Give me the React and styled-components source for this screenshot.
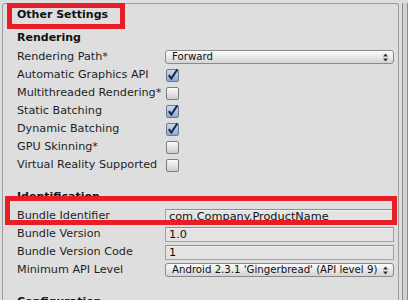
import React from 'react';
import styled, { createGlobalStyle } from 'styled-components';

const Global = createGlobalStyle`
  html, body { margin: 0; padding: 0; background: #dedede; }
  body {
    width: 408px; height: 300px; overflow: hidden;
    font-family: "DejaVu Sans", Verdana, sans-serif;
    color: #1e1e1e;
  }
`;

const Screen = styled.div`
  display: flex;
  align-items: stretch;
  height: 300px;
  box-sizing: border-box;
  padding: 3px 0 0 2px;
`;

const Panel = styled.div`
  width: 397px;
  box-sizing: border-box;
  border: 1px solid #9c9c9c;
  border-bottom: none;
  border-radius: 3px 3px 0 0;
  background: #dedede;
  padding-top: 2px;
`;

const Scroll = styled.div`
  margin-left: 3px;
  width: 6px;
  box-sizing: border-box;
  border-left: 1px solid #8c8c8c;
  border-right: 1px solid #8c8c8c;
  background: #d2d2d2;
`;

const Marked = styled.div`
  position: relative;
  &::after {
    content: '';
    position: absolute;
    box-sizing: border-box;
    border: 5px solid #e81d25;
    pointer-events: none;
    left: ${p => p.$l}px;
    top: ${p => p.$t}px;
    width: ${p => p.$w}px;
    height: ${p => p.$h}px;
  }
`;

const Title = styled.div`
  height: 18px;
  line-height: 18px;
  padding-left: 14px;
  font-size: 11px;
  font-weight: bold;
  color: #111;
`;

const Section = styled.div`
  margin-top: ${p => (p.$first ? 5 : 14)}px;
  display: flex;
  flex-direction: column;
`;

const Header = styled.div`
  height: 19px;
  line-height: 18px;
  padding-left: 14px;
  font-size: 11px;
  font-weight: bold;
  color: #111;
`;

const Row = styled.div`
  display: flex;
  align-items: center;
  height: 18px;
  padding-left: 14px;
`;

const Label = styled.div`
  width: 148px;
  flex: none;
  font-size: 11.2px;
  line-height: 18px;
  white-space: nowrap;
`;

const Box = styled.div`
  width: 13px;
  height: 13px;
  margin-left: 1px;
  box-sizing: border-box;
  border-radius: 2px;
  border: 1px solid ${p => (p.$on ? '#6d7a8c' : '#7c7c7c')};
  background: ${p =>
    p.$on
      ? 'linear-gradient(#c9daf0, #8eaad3)'
      : 'linear-gradient(#fbfbfb, #cdcdcd)'};
  display: flex;
  svg { overflow: visible; }
`;

const Popup = styled.div`
  width: 229px;
  height: 14px;
  box-sizing: border-box;
  border: 1px solid #8a8a8a;
  border-radius: 3px;
  background: linear-gradient(#fcfcfc, #d4d4d4);
  display: flex;
  align-items: center;
  padding: 0 5px 0 6px;
  font-size: 10.2px;
  line-height: 12px;
  color: #111;
  white-space: nowrap;
  span { flex: 1; }
`;

const Field = styled.div`
  width: 229px;
  height: 15px;
  box-sizing: border-box;
  border: 1px solid #a2a2a2;
  border-top-color: #8e8e8e;
  background: #e3e3e3;
  box-shadow: inset 0 1px 0 #f0f0f0;
  padding-left: 3px;
  font-size: 11.3px;
  line-height: 13px;
  color: #111;
  white-space: nowrap;
`;

const Check = () => (
  <svg width="11" height="11" viewBox="0 0 11 11">
    <path d="M1.8 5.2 L4.3 8.6 L10.4 -0.6" fill="none" stroke="#1a2a44" strokeWidth="2" />
  </svg>
);

const Arrows = () => (
  <svg width="5" height="9" viewBox="0 0 5 9">
    <path d="M2.5 0.5 L5 3.5 L0 3.5 Z" fill="#333" />
    <path d="M0 5.5 L5 5.5 L2.5 8.5 Z" fill="#333" />
  </svg>
);

const CheckRow = ({ label, on }) => (
  <Row>
    <Label>{label}</Label>
    <Box $on={on}>{on && <Check />}</Box>
  </Row>
);

const PopupRow = ({ label, value }) => (
  <Row>
    <Label>{label}</Label>
    <Popup>
      <span>{value}</span>
      <Arrows />
    </Popup>
  </Row>
);

const FieldRow = ({ label, value }) => (
  <Row>
    <Label>{label}</Label>
    <Field>{value}</Field>
  </Row>
);

export default function App() {
  return (
    <>
      <Global />
      <Screen>
        <Panel>
          <Marked $l={4} $t={-3} $w={118} $h={26}>
            <Title>Other Settings</Title>
          </Marked>
          <Section $first>
            <Header>Rendering</Header>
            <PopupRow label="Rendering Path*" value="Forward" />
            <CheckRow label="Automatic Graphics API" on />
            <CheckRow label="Multithreaded Rendering*" />
            <CheckRow label="Static Batching" on />
            <CheckRow label="Dynamic Batching" on />
            <CheckRow label="GPU Skinning*" />
            <CheckRow label="Virtual Reality Supported" />
          </Section>
          <Section>
            <Header>Identification</Header>
            <Marked $l={2} $t={-11} $w={392} $h={29}>
              <FieldRow label="Bundle Identifier" value="com.Company.ProductName" />
            </Marked>
            <FieldRow label="Bundle Version" value="1.0" />
            <FieldRow label="Bundle Version Code" value="1" />
            <PopupRow label="Minimum API Level" value="Android 2.3.1 'Gingerbread' (API level 9)" />
          </Section>
          <Section>
            <Header>Configuration</Header>
          </Section>
        </Panel>
        <Scroll />
      </Screen>
    </>
  );
}
